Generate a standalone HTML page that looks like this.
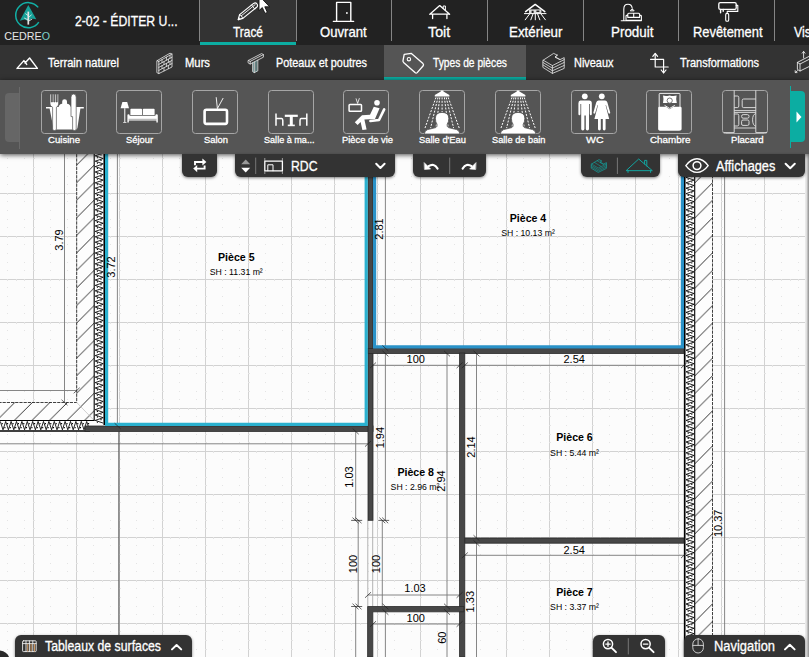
<!DOCTYPE html>
<html lang="fr">
<head>
<meta charset="utf-8">
<title>Cedreo</title>
<style>
html,body{margin:0;padding:0;}
body{width:809px;height:657px;overflow:hidden;position:relative;background:#fcfcfc;font-family:"Liberation Sans",sans-serif;}
#plan{position:absolute;left:0;top:0;width:809px;height:657px;}
#plan text{font-family:"Liberation Sans",sans-serif;fill:#000;}
.dim{font-size:11px;text-anchor:middle;}
.rn{font-size:10.6px;font-weight:bold;text-anchor:middle;}
.rs{font-size:8.7px;text-anchor:middle;}
/* UI */
.abs{position:absolute;}
.fx{position:absolute;color:#fff;-webkit-text-stroke:0.3px #fff;white-space:nowrap;transform-origin:0 0;display:block;}
#topbar{position:absolute;left:0;top:0;width:809px;height:45px;background:#222;}
#bar2{position:absolute;left:0;top:45px;width:809px;height:35px;background:#333;}
#bar3{position:absolute;left:0;top:80px;width:809px;height:74px;background:#555;box-shadow:0 1px 5px rgba(0,0,0,.7);}
.t{position:absolute;color:#fff;white-space:nowrap;line-height:1;}
.tab{position:absolute;top:0;height:45px;}
.sep{position:absolute;top:0;width:1px;height:41px;background:#858585;}
.tl{position:absolute;color:#fff;font-size:14px;white-space:nowrap;line-height:16px;top:24px;text-align:center;}
.t2{position:absolute;color:#fff;font-size:12.5px;white-space:nowrap;line-height:14px;top:56px;}
.ib{position:absolute;top:90px;width:44px;height:42.3px;border:1px solid #a6a6a6;border-radius:3.5px;}
.il{position:absolute;top:134px;width:76px;text-align:center;color:#fff;font-size:9.5px;line-height:11px;white-space:nowrap;}
.w{position:absolute;background:#333;box-shadow:0 1px 3px rgba(0,0,0,.5);}
.wt{top:154px;height:23px;border-radius:0 0 6px 6px;}
.wb{top:635px;height:22px;border-radius:6px 6px 0 0;}
.wtx{position:absolute;color:#fff;font-size:14px;line-height:16px;white-space:nowrap;}
</style>
</head>
<body>
<svg id="plan" width="809" height="657" viewBox="0 0 809 657">
<defs>
<pattern id="grid" x="33" y="150" width="43" height="43" patternUnits="userSpaceOnUse">
<rect width="43" height="43" fill="#fcfcfc"/>
<path d="M0.5 0V43M0 0.5H43" stroke="#d2d2d2" stroke-width="1" fill="none"/>
<g fill="#e4e4e4">
<rect x="17" y="8" width="1" height="1"/><rect x="34" y="8" width="1" height="1"/>
<rect x="17" y="17" width="1" height="1"/><rect x="17" y="26" width="1" height="1"/><rect x="34" y="26" width="1" height="1"/>
<rect x="17" y="34" width="1" height="1"/><rect x="34" y="34" width="1" height="1"/>
<rect x="8" y="0" width="1" height="2"/><rect x="17" y="0" width="1" height="2"/><rect x="26" y="0" width="1" height="2"/><rect x="34" y="0" width="1" height="2"/>
<rect x="0" y="8" width="2" height="1"/><rect x="0" y="17" width="2" height="1"/><rect x="0" y="26" width="2" height="1"/><rect x="0" y="34" width="2" height="1"/>
</g>
</pattern>
<pattern id="hatch" x="76.7" y="7.1" width="17.55" height="17.55" patternUnits="userSpaceOnUse">
<rect width="17.55" height="17.55" fill="#fdfdfd"/>
<path d="M-1 18.55L18.55 -1" stroke="#000" stroke-width="0.8" fill="none"/>
</pattern>
<pattern id="hatchR" x="694.7" y="7.5" width="17.55" height="17.55" patternUnits="userSpaceOnUse">
<rect width="17.55" height="17.55" fill="#fdfdfd"/>
<path d="M-1 18.55L18.55 -1" stroke="#000" stroke-width="0.8" fill="none"/>
</pattern>
</defs>
<rect x="0" y="0" width="809" height="657" fill="url(#grid)"/>
<!-- thin dimension / guide lines -->
<g stroke="#787878" stroke-width="0.9" fill="none">
<path d="M64.5 150V402.5M0 390.5H76.7M117.4 150V426M0 443.8H368"/>
<path d="M385.4 150V520.4M385.4 606.5V657M355.7 431V520.3M358.2 520.3V606.5M355.7 606.5V657M447 353V657M476.5 353V657"/>
<path d="M373 365.3H460M465 365.3H684M465 555.3H684M368 595H460M373 624H460M724.6 150V657M382.3 520.4V606.5"/>
<path d="M367.8 520.3V606.5M372.7 520.3V606.5" stroke="#aaa"/>
<path d="M118.9 431.4V657" stroke="#555" stroke-width="1.1"/>
</g>
<!-- left exterior wall -->
<path d="M76.7 150H94.2V420.5H0V402.5H76.7Z" fill="url(#hatch)"/>
<path d="M76.7 150V402.5H0" stroke="#111" stroke-width="0.8" stroke-dasharray="3.2 1" fill="none"/>
<path d="M76.7 402.5L94.2 420.5" stroke="#bbb" stroke-width="0.7"/>
<rect x="94.2" y="150" width="10.8" height="276" fill="#fff"/>
<rect x="0" y="420.5" width="94" height="10.9" fill="#fff"/>
<path d="M94.2 150V420.5H0" stroke="#000" stroke-width="1.1" fill="none"/>
<path d="M0 431H90M104.3 150V425" stroke="#000" stroke-width="1.7" fill="none"/>
<!-- right exterior wall -->
<rect x="694.7" y="150" width="17.8" height="507" fill="url(#hatchR)"/>
<rect x="684" y="150" width="10.7" height="507" fill="#fff"/>
<g fill="none" stroke="#000" stroke-width="0.85" stroke-linejoin="miter">
<path d="M95.2 150.40L103.2 153.10L95.2 155.80L103.2 158.50L95.2 161.20L103.2 163.90L95.2 166.60L103.2 169.30L95.2 172.00L103.2 174.70L95.2 177.40L103.2 180.10L95.2 182.80L103.2 185.50L95.2 188.20L103.2 190.90L95.2 193.60L103.2 196.30L95.2 199.00L103.2 201.70L95.2 204.40L103.2 207.10L95.2 209.80L103.2 212.50L95.2 215.20L103.2 217.90L95.2 220.60L103.2 223.30L95.2 226.00L103.2 228.70L95.2 231.40L103.2 234.10L95.2 236.80L103.2 239.50L95.2 242.20L103.2 244.90L95.2 247.60L103.2 250.30L95.2 253.00L103.2 255.70L95.2 258.40L103.2 261.10L95.2 263.80L103.2 266.50L95.2 269.20L103.2 271.90L95.2 274.60L103.2 277.30L95.2 280.00L103.2 282.70L95.2 285.40L103.2 288.10L95.2 290.80L103.2 293.50L95.2 296.20L103.2 298.90L95.2 301.60L103.2 304.30L95.2 307.00L103.2 309.70L95.2 312.40L103.2 315.10L95.2 317.80L103.2 320.50L95.2 323.20L103.2 325.90L95.2 328.60L103.2 331.30L95.2 334.00L103.2 336.70L95.2 339.40L103.2 342.10L95.2 344.80L103.2 347.50L95.2 350.20L103.2 352.90L95.2 355.60L103.2 358.30L95.2 361.00L103.2 363.70L95.2 366.40L103.2 369.10L95.2 371.80L103.2 374.50L95.2 377.20L103.2 379.90L95.2 382.60L103.2 385.30L95.2 388.00L103.2 390.70L95.2 393.40L103.2 396.10L95.2 398.80L103.2 401.50L95.2 404.20L103.2 406.90L95.2 409.60L103.2 412.30L95.2 415.00L103.2 417.70L95.2 420.40L103.2 423.10"/>
<path d="M686.0 150.40L694.0 153.10L686.0 155.80L694.0 158.50L686.0 161.20L694.0 163.90L686.0 166.60L694.0 169.30L686.0 172.00L694.0 174.70L686.0 177.40L694.0 180.10L686.0 182.80L694.0 185.50L686.0 188.20L694.0 190.90L686.0 193.60L694.0 196.30L686.0 199.00L694.0 201.70L686.0 204.40L694.0 207.10L686.0 209.80L694.0 212.50L686.0 215.20L694.0 217.90L686.0 220.60L694.0 223.30L686.0 226.00L694.0 228.70L686.0 231.40L694.0 234.10L686.0 236.80L694.0 239.50L686.0 242.20L694.0 244.90L686.0 247.60L694.0 250.30L686.0 253.00L694.0 255.70L686.0 258.40L694.0 261.10L686.0 263.80L694.0 266.50L686.0 269.20L694.0 271.90L686.0 274.60L694.0 277.30L686.0 280.00L694.0 282.70L686.0 285.40L694.0 288.10L686.0 290.80L694.0 293.50L686.0 296.20L694.0 298.90L686.0 301.60L694.0 304.30L686.0 307.00L694.0 309.70L686.0 312.40L694.0 315.10L686.0 317.80L694.0 320.50L686.0 323.20L694.0 325.90L686.0 328.60L694.0 331.30L686.0 334.00L694.0 336.70L686.0 339.40L694.0 342.10L686.0 344.80L694.0 347.50L686.0 350.20L694.0 352.90L686.0 355.60L694.0 358.30L686.0 361.00L694.0 363.70L686.0 366.40L694.0 369.10L686.0 371.80L694.0 374.50L686.0 377.20L694.0 379.90L686.0 382.60L694.0 385.30L686.0 388.00L694.0 390.70L686.0 393.40L694.0 396.10L686.0 398.80L694.0 401.50L686.0 404.20L694.0 406.90L686.0 409.60L694.0 412.30L686.0 415.00L694.0 417.70L686.0 420.40L694.0 423.10L686.0 425.80L694.0 428.50L686.0 431.20L694.0 433.90L686.0 436.60L694.0 439.30L686.0 442.00L694.0 444.70L686.0 447.40L694.0 450.10L686.0 452.80L694.0 455.50L686.0 458.20L694.0 460.90L686.0 463.60L694.0 466.30L686.0 469.00L694.0 471.70L686.0 474.40L694.0 477.10L686.0 479.80L694.0 482.50L686.0 485.20L694.0 487.90L686.0 490.60L694.0 493.30L686.0 496.00L694.0 498.70L686.0 501.40L694.0 504.10L686.0 506.80L694.0 509.50L686.0 512.20L694.0 514.90L686.0 517.60L694.0 520.30L686.0 523.00L694.0 525.70L686.0 528.40L694.0 531.10L686.0 533.80L694.0 536.50L686.0 539.20L694.0 541.90L686.0 544.60L694.0 547.30L686.0 550.00L694.0 552.70L686.0 555.40L694.0 558.10L686.0 560.80L694.0 563.50L686.0 566.20L694.0 568.90L686.0 571.60L694.0 574.30L686.0 577.00L694.0 579.70L686.0 582.40L694.0 585.10L686.0 587.80L694.0 590.50L686.0 593.20L694.0 595.90L686.0 598.60L694.0 601.30L686.0 604.00L694.0 606.70L686.0 609.40L694.0 612.10L686.0 614.80L694.0 617.50L686.0 620.20L694.0 622.90L686.0 625.60L694.0 628.30L686.0 631.00L694.0 633.70L686.0 636.40L694.0 639.10L686.0 641.80L694.0 644.50L686.0 647.20L694.0 649.90L686.0 652.60L694.0 655.30"/>
<path d="M0.30 421.4L3.00 429.8L5.70 421.4L8.40 429.8L11.10 421.4L13.80 429.8L16.50 421.4L19.20 429.8L21.90 421.4L24.60 429.8L27.30 421.4L30.00 429.8L32.70 421.4L35.40 429.8L38.10 421.4L40.80 429.8L43.50 421.4L46.20 429.8L48.90 421.4L51.60 429.8L54.30 421.4L57.00 429.8L59.70 421.4L62.40 429.8L65.10 421.4L67.80 429.8L70.50 421.4L73.20 429.8L75.90 421.4L78.60 429.8L81.30 421.4L84.00 429.8L86.70 421.4L89.40 429.8"/>
</g>
<g fill="none" stroke="#000" stroke-width="1.1">
<path d="M97.4 151.75V424" stroke-dasharray="1.1 4.3"/>
<path d="M101 154.45V424" stroke-dasharray="1.1 4.3"/>
<path d="M688.2 151.75V657" stroke-dasharray="1.1 4.3"/>
<path d="M691.8 154.45V657" stroke-dasharray="1.1 4.3"/>
<path d="M1.65 423.6H92" stroke-dasharray="1.1 4.3"/>
<path d="M4.35 427.6H88" stroke-dasharray="1.1 4.3"/>
</g>

<path d="M712.5 150V657" stroke="#111" stroke-width="0.8" stroke-dasharray="3.2 1" fill="none"/>
<path d="M694.7 150V657" stroke="#000" stroke-width="1.1" fill="none"/>
<path d="M684.7 150V657" stroke="#000" stroke-width="1.7" fill="none"/>
<!-- dark walls -->
<g fill="#474747" stroke="#2a2a2a" stroke-width="0.8">
<rect x="85" y="426" width="288" height="5.4"/>
<rect x="368" y="150" width="5" height="370.3"/>
<rect x="368" y="348.5" width="316" height="5"/>
<rect x="459.6" y="353" width="5.2" height="304"/>
<rect x="464.8" y="538" width="219.2" height="5.2"/>
<path d="M367.6 657V606.5H464V611.8H372.8V657Z"/>
</g>
<!-- teal room outlines -->
<g fill="none" stroke-width="3.2">
<path d="M106.6 150V424.4H366.2V150" stroke="#2bb1cf"/>
<path d="M374.6 150V346.8H682.4V150" stroke="#2a92c8"/>
</g>
<!-- ticks -->
<g stroke="#222" stroke-width="0.7" fill="none">
<path d="M61.5 399.7l6 5.6M114.6 423.2l6 5.6M382.4 345.4l6 5.6M382.4 350.8l6 5.6M444.0 350.8l6 5.6M473.5 350.8l6 5.6M352.7 428.6l6 5.6M352.5 517.6l6 5.6M355.5 517.6l6 5.6M352.5 603.7l6 5.6M355.5 603.7l6 5.6M379.3 517.6l6 5.6M382.2 517.6l6 5.6M382.4 603.7l6 5.6M382.4 609.2l6 5.6M444.0 603.7l6 5.6M444.0 609.2l6 5.6M473.5 535.2l6 5.6M473.5 540.4l6 5.6M73.7 393.3l6 -5.6M365.0 446.6l6 -5.6M370.0 368.1l6 -5.6M456.6 368.1l6 -5.6M461.8 368.1l6 -5.6M681.0 368.1l6 -5.6M461.8 558.1l6 -5.6M681.0 558.1l6 -5.6M365.0 597.8l6 -5.6M456.6 597.8l6 -5.6M370.0 626.8l6 -5.6M456.6 626.8l6 -5.6M351.2 520.4H362.2M351.2 606.5H362.2M378.4 520.4H389.2"/>
</g>
<!-- dimension texts -->
<g class="dim">
<text transform="translate(63.4 240) rotate(-90)">3.79</text>
<text transform="translate(114.6 267) rotate(-90)">3.72</text>
<text transform="translate(383.2 229) rotate(-90)">2.81</text>
<text transform="translate(383.5 437.6) rotate(-90)">1.94</text>
<text transform="translate(353 477) rotate(-90)">1.03</text>
<text transform="translate(356.7 564) rotate(-90)">100</text>
<text transform="translate(380 564) rotate(-90)">100</text>
<text transform="translate(445 481) rotate(-90)">2.94</text>
<text transform="translate(475 447) rotate(-90)">2.14</text>
<text transform="translate(474 601.7) rotate(-90)">1.33</text>
<text transform="translate(445.7 637.7) rotate(-90)">60</text>
<text transform="translate(722 523.3) rotate(-90)">10.37</text>
<text x="415.7" y="363.3">100</text>
<text x="574.2" y="363.3">2.54</text>
<text x="574.2" y="554">2.54</text>
<text x="415" y="592">1.03</text>
<text x="415.7" y="622">100</text>
</g>
<!-- room labels -->
<text class="rn" x="236.3" y="261">Pièce 5</text><text class="rs" x="236.3" y="275.2">SH : 11.31 m²</text>
<text class="rn" x="528" y="222">Pièce 4</text><text class="rs" x="528" y="236.4">SH : 10.13 m²</text>
<text class="rn" x="574.5" y="440.8">Pièce 6</text><text class="rs" x="574.5" y="455.6">SH : 5.44 m²</text>
<text class="rn" x="415.7" y="475.8">Pièce 8</text><text class="rs" x="415" y="490.4">SH : 2.96 m²</text>
<text class="rn" x="574.5" y="595.8">Pièce 7</text><text class="rs" x="574.5" y="610.4">SH : 3.37 m²</text>

</svg>
<div class="abs" id="rstrip" style="left:804.6px;top:154px;width:4.4px;height:503px;background:linear-gradient(90deg,#efefef 0%,#dedede 40%,#b4b4b4 70%,#8e8e8e 100%)"></div>
<div id="topbar">
<svg class="abs" style="left:0;top:0" width="60" height="45" viewBox="0 0 60 45">
<path d="M38.2 7.4A12.6 12.6 0 1 0 38.8 22.2" fill="none" stroke="#12b0a6" stroke-width="1.5"/>
<path d="M28.3 5L19.8 20.8L24.6 19.4L28.2 21L31.6 18.6L36.3 19.2Z" fill="#17a198"/>
<path d="M28.3 11.6V24.6" stroke="#e4e4e4" stroke-width="1.7" fill="none"/>
<path d="M28.2 15.6l-2.8-2M28.2 17.6l3.4-2.8M28.2 20l-4-2M28.2 21.4l4-2.4" stroke="#dfe9e8" stroke-width="0.9" fill="none"/>
<text x="4.2" y="40" font-family="Liberation Sans,sans-serif" font-size="11.6" fill="#e6e6e6" textLength="45.8" lengthAdjust="spacingAndGlyphs">CEDRE<tspan fill="#7fd0ca">O</tspan></text>
</svg>

<div class="abs" style="left:200px;top:0;width:96px;height:42px;background:#333;border-bottom:3px solid #0cada2"></div>
<div class="sep" style="left:199px"></div><div class="sep" style="left:296px"></div>
<div class="sep" style="left:391px"></div><div class="sep" style="left:487px"></div><div class="sep" style="left:583px"></div><div class="sep" style="left:678px"></div><div class="sep" style="left:774px"></div>
<svg class="abs" style="left:0;top:0" width="809" height="45" viewBox="0 0 809 45" fill="none" stroke="#fff" stroke-width="1.2" stroke-linejoin="round" stroke-linecap="round">
<!-- pencil -->
<path d="M238.2 19.6L239.6 14.6L253.6 3.4Q255.6 2.2 257 4Q258.3 5.8 256.6 7.3L242.8 18.4Z"/>
<path d="M239.6 14.6Q242 15.4 242.8 18.4M241.3 15.8L255.2 4.6M251.6 5L254.6 8.9" stroke-width="0.9"/>
<path d="M238.2 19.6l0.6-2.2l1.4 1.6Z" fill="#fff" stroke-width="0.6"/>
<!-- door -->
<path d="M336.6 21.3V2.4H350.8V21.3M333.4 21.4H353.6" stroke-width="1.4"/>
<circle cx="346.9" cy="13" r="0.9" fill="#fff" stroke="none"/>
<!-- roof -->
<path d="M429.8 14.2L439.7 5.6L449.6 14.2M432.6 14.2V18.6M446.9 14.2V18.6M430.4 14.2H449" stroke-width="1.3"/>
<path d="M443.2 8.4V6H445.4V10.4" stroke-width="1"/>
<!-- exterior -->
<g stroke-width="1">
<path d="M525.6 11.6L535.2 4.4L544.8 11.6" stroke-width="1.5"/>
<path d="M529 9.4V13.2H541.4V9.4" fill="#ddd" stroke="none"/>
<path d="M531.6 13.2V10.8H533.6V13.2ZM536.4 10.4H539.4V12H536.4Z" fill="#222" stroke="none"/>
<path d="M524.4 13.6H546"/>
<path d="M529.6 14L525.2 19.8M533 14L530.8 19.8M535.3 14V19.8M537.6 14L539.8 19.8M541 14L545.4 19.8"/>
</g>
<!-- produit: lamp + sofa -->
<g stroke-width="1.1">
<path d="M623.8 20.6V9.2Q623.8 4.2 628 4.2Q631.8 4.2 632.2 8.2M621.2 20.8H641.2"/>
<path d="M630.4 10.6Q632.2 7.4 634 10.6Z" fill="#fff" stroke-width="0.8"/>
<path d="M627.8 17V14.2Q627.8 13.2 628.8 13.2H638.6Q639.6 13.2 639.6 14.2V17M626 20.4V16.2Q626 15.4 626.9 15.4Q627.8 15.4 627.8 16.2V17.4H639.6V16.2Q639.6 15.4 640.5 15.4Q641.4 15.4 641.4 16.2V20.4ZM633.7 13.4V17.2"/>
</g>
<!-- roller -->
<g stroke-width="1.3">
<rect x="718.8" y="2.6" width="17.4" height="6.8" rx="1.4"/>
<path d="M736.2 5.4H737.8V11.4H727.2V13.4" stroke-width="1.1"/>
<rect x="725.7" y="13.4" width="3" height="7.8" rx="1.3" stroke-width="1.1"/>
<path d="M720.6 9.4V12.8M723.2 9.4V11.2" stroke-width="1.4"/>
</g>
</svg>

</div>
<div id="bar2">
<div class="abs" style="left:384px;top:0;width:142px;height:32px;background:#555;border-bottom:3px solid #0cada2"></div>
<svg class="abs" style="left:0;top:0" width="809" height="35" viewBox="0 45 809 35" fill="none" stroke="#fff" stroke-width="1.2" stroke-linejoin="round" stroke-linecap="round">
<!-- mountain -->
<path d="M17 68.4L23.9 60.6L26.7 64.4M17 68.4H37.4L29.6 58L25 63" stroke-width="1.4"/>
<!-- wall (bricks) -->
<g stroke-width="0.8" stroke="#e8e8e8">
<path d="M157.2 60.6L170 53.2L172 54V67L158.8 73.6L157.2 72.8ZM158.8 61.4V73.6M158.8 61.4L172 54M157.2 60.6L158.8 61.4"/>
<path d="M158.8 64.4L172 57.2M158.8 67.4L172 60.4M158.8 70.4L172 63.6M162 59.6V62.6M166.4 57.2V60.2M170 55.2V58.2M164 61.6V64.6M168.4 59.2V62.4M162 65.6V68.6M166.4 63.4V66.4M170 61.4V64.4M164 67.8V70.8M168.4 65.6V68.6"/>
</g>
<!-- post and beam -->
<g stroke-width="0.8" stroke="#e8e8e8">
<path d="M248.4 60.4L261.6 53.6L263.4 54.6V57.2L250.2 64L248.4 63ZM248.4 60.4L250.2 61.4L263.4 54.6M250.2 61.4V64"/>
<path d="M252.6 62.8V71.6L254.4 72.6L257.8 70.8V60.2M254.4 62V72.6" />
<path d="M253.5 62.4V72M255.6 61.6V71.8M256.8 61V71.2" stroke="#9cc" stroke-width="0.6"/>
</g>
<!-- tag -->
<g stroke-width="1.3">
<path d="M404.2 54.4L411.4 53.4L423 63.6Q424 64.6 423.2 65.8L417.2 72.6Q416.2 73.6 415 72.6L403.6 62.4Q402.8 61.6 403 60.6Z"/>
<circle cx="408.9" cy="59.2" r="1.7" stroke-width="1.1"/>
</g>
<!-- levels -->
<g stroke-width="0.8" stroke="#e8e8e8">
<path d="M543.2 60.2L553.6 53.4L557.4 55.2L555 57L560 59.6L564.2 57.6V68.4L552.4 73.4L543.2 67.6Z"/>
<path d="M543.2 60.2L552.4 65.6L564.2 59.6M543.2 62.6L552.4 68.2L564.2 62.4M543.2 65L552.4 70.8L564.2 65.4M552.4 65.6V73.4M557.4 55.2L555 57L560 59.6"/>
</g>
<!-- transformations -->
<g stroke-width="1.2">
<path d="M655.2 54V67H668.2M650.6 59.4H663.6V72.4"/>
<path d="M652.8 56.4L655.2 53.4L657.6 56.4M661.2 70L663.6 73L666 70" />
</g>
<!-- box with arrows (cut) -->
<g stroke-width="0.9" stroke="#e8e8e8">
<path d="M797.4 62.4L809 56.4M797.4 62.4V69.4L800 71L809 66.6M800 64V71M797.4 62.4L800 64L809 59.4"/>
<path d="M803.6 58V51.6M802.2 53.2L803.6 51.4L805 53.2M795.4 72.4L797.6 70.6M795.2 70.6V72.6H797"/>
</g>
</svg>

</div>
<div id="bar3">
<div class="abs" style="left:5px;top:13px;width:14px;height:49px;background:#666;border-radius:4px 0 0 4px"></div>
<div class="abs" style="left:19px;top:7px;width:1px;height:62px;background:#6a6a6a"></div>
<div class="abs" style="left:790px;top:6px;width:1px;height:62px;background:#0cada2"></div>
<div class="abs" style="left:791px;top:11px;width:14px;height:51px;background:#0cada2;border-radius:0 4px 4px 0"></div>
<svg class="abs" style="left:795px;top:31px" width="8" height="12"><path d="M1.5 0.5L6.5 6L1.5 11.5Z" fill="#fff"/></svg>
</div>
<div class="ib" style="left:41.1px"></div>
<div class="ib" style="left:116.3px"></div>
<div class="ib" style="left:192.4px"></div>
<div class="ib" style="left:268.4px"></div>
<div class="ib" style="left:343.1px"></div>
<div class="ib" style="left:419.2px"></div>
<div class="ib" style="left:495.1px"></div>
<div class="ib" style="left:571.2px"></div>
<div class="ib" style="left:646.4px"></div>
<div class="ib" style="left:722.4px"></div>
<svg class="abs" style="left:0;top:80px" width="809" height="74" viewBox="0 80 809 74" fill="#fff" stroke="none">
<!-- Cuisine -->
<g>
<path d="M46 107H83.8V108.4H80.4L77.4 128Q77.2 129.6 75.6 129.6H55.2Q53.6 129.6 53.4 128L49.6 108.4H46Z"/>
<path d="M58.6 107Q59.2 104 62.2 103.7V101.6Q62.2 99.3 64.6 99.3Q67 99.3 67 101.6V103.7Q70 104 70.8 107Z"/>
<path d="M50 94H51.4V102H52.4V94H53.8V102H54.8V94H56.2V102H57.2V94H58.6V104Q58.6 106.4 56.4 107.2V129Q56.4 130.6 54.4 130.6Q52.6 130.6 52.6 129V107.2Q50 106.4 50 104Z" stroke="#555" stroke-width="0.7"/>
<path d="M71 97.4Q71 94 73.6 94Q76.2 94 76.2 97.4V129Q76.2 130.6 74.4 130.6Q72.6 130.6 72.6 129V116.6H71Z" stroke="#555" stroke-width="0.7"/>
</g>
<!-- Sejour -->
<g>
<path d="M122.4 102H127.2L129 108.2H120.6Z"/>
<path d="M124.3 108.2H125.3V122H126.4V122.8H123.2V122H124.3Z"/>
<path d="M130.4 109.6Q130.4 108.8 131.2 108.8H141.2Q142 108.8 142 109.6V115H130.4ZM142.8 109.6Q142.8 108.8 143.6 108.8H153.8Q154.6 108.8 154.6 109.6V115H142.8ZM127.4 115.2Q127.4 114.2 128.4 114.2Q129.6 114.2 129.6 115.2V115.8H155.4V115.2Q155.4 114.2 156.6 114.2Q157.8 114.2 157.8 115.2V122.6H156.4V120.6H128.8V122.6H127.4Z"/>
<path d="M128.6 119.3H156.6" stroke="#555" stroke-width="0.5"/>
</g>
<!-- Salon TV -->
<g fill="none" stroke="#fff">
<rect x="204.6" y="109.7" width="22.4" height="14.2" rx="1.8" stroke-width="2.6"/>
<path d="M216.2 97.2L217.4 108.6L223.2 98" stroke-width="0.9"/>
</g>
<!-- Salle a manger -->
<g fill="none" stroke="#fff" stroke-width="1.5">
<path d="M276 113.4V125.8M276 118.6H281.6Q282.8 118.8 282.8 120.4V125.8"/>
<path d="M306.8 113.4V125.8M306.8 118.6H301.2Q300 118.8 300 120.4V125.8"/>
<path d="M284.8 115.8H297.8" stroke-width="2.2"/>
<path d="M291.3 116V125.6" stroke-width="3"/>
<path d="M287.8 125.4H294.8" stroke-width="1.6"/>
</g>
<!-- Piece de vie -->
<g>
<rect x="349.1" y="104.4" width="12.4" height="6.8" rx="0.8" fill="none" stroke="#fff" stroke-width="1.5"/>
<path d="M356 98.4L357.6 103.4L359.4 98.2" fill="none" stroke="#fff" stroke-width="0.8"/>
<circle cx="377" cy="102.8" r="2.8"/>
<path d="M373.8 106.8L379.6 108.2L375 119L364.4 119.6L366.6 129.4L362.4 130L360.6 122L357.6 125L354.8 122.2L362 115.2L370 114.8Z"/>
<path d="M384.2 109.4L379 120L370.4 121" fill="none" stroke="#fff" stroke-width="2.6" stroke-linecap="round" stroke-linejoin="round"/>
</g>
<!-- Salle d'Eau / Salle de bain showers -->
<g id="shw">
<path d="M440.8 90.4H443.4V91.6L449.4 95V96.4H434.8V95L440.8 91.6Z"/>
<g fill="none" stroke="#fff" stroke-width="1" stroke-dasharray="2 1.4">
<path d="M436 97.4L425 128M438 97.4L430.6 128M439.8 97.4L436 128M442.1 97.4V112M444.4 97.4L448.2 128M446.2 97.4L453.6 128M448.2 97.4L459.2 128"/>
</g>
<path d="M435.4 118.4Q435.4 112.4 442.1 112.4Q448.8 112.4 448.8 118.4Q448.8 122 447.2 124.2Q446.6 126.6 448.4 127.6L456.6 129.6Q459.4 130.6 460 134H424.2Q424.8 130.6 427.6 129.6L435.8 127.6Q437.6 126.6 437 124.2Q435.4 122 435.4 118.4Z" stroke="#555" stroke-width="0.8"/>
</g>
<use href="#shw" x="76"/>
<!-- WC -->
<g>
<circle cx="584.8" cy="96.3" r="2.9"/>
<path d="M580.4 100.6H589.2Q591.8 100.6 591.8 103.2V114Q591.8 115.2 590.8 115.2Q589.8 115.2 589.8 114V104H589V129Q589 130.4 587.4 130.4Q585.8 130.4 585.8 129V115.6H584.4V129Q584.4 130.4 582.8 130.4Q581.2 130.4 581.2 129V104H580.4V114Q580.4 115.2 579.4 115.2Q578.4 115.2 578.4 114V103.2Q578.4 100.6 580.4 100.6Z"/>
<circle cx="601.8" cy="96.3" r="2.9"/>
<path d="M598.6 100.6H605Q606.8 100.6 607.4 102.4L610.2 112.4Q610.4 113.4 609.6 113.6Q608.8 113.8 608.4 113L606 105L605.6 105.2L609.2 119H605.6V129Q605.6 130.4 604.2 130.4Q602.8 130.4 602.8 129V119H600.8V129Q600.8 130.4 599.4 130.4Q598 130.4 598 129V119H594.4L598 105.2L597.6 105L595.2 113Q594.8 113.8 594 113.6Q593.2 113.4 593.4 112.4L596.2 102.4Q596.8 100.6 598.6 100.6Z"/>
</g>
<!-- Chambre -->
<g>
<rect x="659.2" y="93.4" width="20.8" height="36.6" rx="0.8" fill="none" stroke="#fff" stroke-width="0.9"/>
<path d="M663 95.6Q666 96.6 669.6 95.4Q673.4 96.6 676.6 95.6Q675.6 99.4 676.8 103H663Q664 99.4 663 95.6Z"/>
<circle cx="669.7" cy="100.6" r="2.6" stroke="#555" stroke-width="0.8"/>
<path d="M658.2 108Q658.2 106.8 659.4 106.8H666L669.7 109.2L673.4 106.8H680.2Q681.6 106.8 681.6 108V129Q681.6 130.4 680.2 130.4H659.4Q658.2 130.4 658.2 129Z"/>
<path d="M664.6 105.4L669.7 108.4L674.8 105.4" fill="none" stroke="#fff" stroke-width="0.9"/>
</g>
<!-- Placard -->
<g fill="none" stroke="#e4e4e4" stroke-width="0.9">
<path d="M734.2 90.4V132.6H723.6M755.8 90.4V132.6H767M734.2 110.6H755.8M734.2 128H755.8M734.2 112.4H755.8"/>
<path d="M734.2 96H737.4Q738.8 96 738.8 97.6V106Q738.8 107.6 737.4 107.6H734.2M755.8 99H743.6Q742.2 99 742.2 100.4V106.2Q742.2 107.6 743.6 107.6H755.8M734.2 114H737.4Q738.8 114 738.8 115.6V124.4Q738.8 126 737.4 126H734.2M755.8 113.6Q752.6 114.4 752.6 119.8Q752.6 125.4 755.8 126.2"/>
<rect x="741.6" y="114.6" width="7.4" height="3.6" rx="1.6"/><rect x="741.6" y="120" width="7.4" height="5.4" rx="1.4"/>
</g>
</svg>

<!-- floating widgets -->
<div class="w wt" style="left:181.5px;width:35.5px"></div>
<div class="w wt" style="left:235px;width:159.5px"></div>
<div class="w wt" style="left:413px;width:73px"></div>
<div class="w wt" style="left:581.2px;width:78.6px"></div>
<div class="w wt" style="left:678px;width:126.5px"></div>
<div class="w wb" style="left:14.5px;width:177.5px"></div>
<div class="w wb" style="left:593px;width:72px"></div>
<div class="w wb" style="left:683.5px;width:121.5px"></div>
<svg class="abs" style="left:0;top:150px" width="809" height="32" viewBox="0 150 809 32" fill="none" stroke="#fff" stroke-linecap="round" stroke-linejoin="round">
<!-- swap -->
<g stroke-width="1.9" stroke-linecap="butt" stroke-linejoin="miter">
<path d="M195 165.2V162H203.4"/><path d="M202.4 158.4L206.4 162L202.4 165.6Z" fill="#fff" stroke="none"/>
<path d="M204.6 165.4V168.6H196.2"/><path d="M197.2 165L193.2 168.6L197.2 172.2Z" fill="#fff" stroke="none"/>
</g>
<!-- level selector -->
<path d="M245.7 159.4L250.2 164.2H241.2Z" fill="#999" stroke="none"/>
<path d="M245.7 172.6L250.2 167.8H241.2Z" fill="#fff" stroke="none"/>
<path d="M255.7 158V173.6" stroke="#777" stroke-width="1"/>
<rect x="264.8" y="161.2" width="17.6" height="9.6" stroke-width="1.3"/>
<path d="M267.8 170.8V164.8H273V170.8" stroke-width="1"/>
<path d="M264.8 158.4V161M282.4 158.4V161M264.8 171.4V173.6M282.4 171.4V173.6" stroke-width="0.7" stroke="#ccc"/>
<path d="M376.2 163.8L380.4 168L384.6 163.8" stroke-width="2"/>
<!-- undo / redo -->
<path d="M449.7 158V173.6" stroke="#777" stroke-width="1"/>
<path d="M428.6 166.2Q433.8 162.6 437.6 168.6" stroke-width="2.1"/>
<path d="M424.4 162.8L430.6 169L424.8 169.4Z" fill="#fff" stroke="#fff" stroke-width="0.6"/>
<path d="M471.6 166.2Q466.4 162.6 462.6 168.6" stroke-width="2.1"/>
<path d="M475.8 162.8L469.6 169L475.4 169.4Z" fill="#fff" stroke="#fff" stroke-width="0.6"/>
<!-- layers (teal) -->
<g stroke="#12a5a0" stroke-width="0.7">
<path d="M591.6 164L599 159.6L601.8 161L600 162.2L603.8 164L606.4 162.6V168.4L598.2 172.4L591.6 168.4Z"/>
<path d="M591.6 164L598.2 168L606.4 164M591.6 165.5L598.2 169.5L606.4 165.5M591.6 167L598.2 171L606.4 167M594.4 162.4L601 166.4M597.2 160.8L604 164.8" stroke-width="0.55"/>
</g>
<path d="M617.4 158V173.6" stroke="#777" stroke-width="1"/>
<g stroke="#12a5a0" stroke-width="1">
<path d="M626.4 170.4L638.7 159L652 170.4ZM644.6 164V160.4H646.8V166M628 170.4V172.4M650.6 170.4V172.4"/>
</g>
<!-- eye -->
<path d="M685.8 165.6Q691 158.8 697 158.8Q703 158.8 708.2 165.6Q703 172.4 697 172.4Q691 172.4 685.8 165.6Z" stroke-width="1.4"/>
<circle cx="697" cy="165.6" r="3.9" stroke-width="1.5"/>
<path d="M785.6 163.8L790.2 168.2L794.8 163.8" stroke-width="2"/>
</svg>
<svg class="abs" style="left:0;top:630px" width="809" height="27" viewBox="0 630 809 27" fill="none" stroke="#fff" stroke-linecap="round" stroke-linejoin="round">
<path d="M0 650.4Q7 651.4 9 657H0Z" fill="#2a2a2a" stroke="none"/>
<!-- table -->
<g stroke-width="0.9" stroke="#eee">
<rect x="22.6" y="640.8" width="13.6" height="10.8" rx="0.8"/>
<path d="M22.6 643.6H36.2M26 640.8V651.6M29.4 640.8V651.6M32.8 640.8V651.6"/>
<path d="M27.7 644.4V651M31.1 644.4V651M34.5 644.4V651" stroke="#c96" stroke-width="1.2" stroke-dasharray="1 1"/>
</g>
<path d="M172 649.4L176.6 645L181.2 649.4" stroke-width="2"/>
<!-- zoom in/out -->
<g stroke-width="1.5">
<circle cx="608" cy="644.1" r="4.6"/><path d="M611.4 647.6L616 652.2" stroke-width="1.9"/>
<path d="M605.8 644.1H610.2M608 641.9V646.3" stroke-width="1.3"/>
<circle cx="645.6" cy="644.1" r="4.6"/><path d="M649 647.6L653.6 652.2" stroke-width="1.9"/>
<path d="M643.4 644.1H647.8" stroke-width="1.4"/>
</g>
<path d="M628.3 638.6V654" stroke="#777" stroke-width="1"/>
<!-- mouse -->
<g stroke="#ccc" stroke-width="1">
<rect x="692.8" y="638.8" width="10.6" height="14.2" rx="5.3"/>
<path d="M698.1 638.8V645.4M692.8 645.4H703.4"/>
</g>
<path d="M785 649.4L789.8 644.8L794.6 649.4" stroke-width="2"/>
</svg>



<span id="ttl" class="fx" style="left:75.4px;top:14.23px;font-size:14.5px;line-height:14.5px;transform:scaleX(0.8433);">2-02 - ÉDITER U...</span>
<span id="tb1" class="fx" style="left:232.9px;top:24.73px;font-size:14.5px;line-height:14.5px;transform:scaleX(0.8212);">Tracé</span>
<span id="tb2" class="fx" style="left:320.3px;top:24.73px;font-size:14.5px;line-height:14.5px;transform:scaleX(0.9051);">Ouvrant</span>
<span id="tb3" class="fx" style="left:428.3px;top:24.73px;font-size:14.5px;line-height:14.5px;transform:scaleX(0.9833);">Toit</span>
<span id="tb4" class="fx" style="left:508.5px;top:24.73px;font-size:14.5px;line-height:14.5px;transform:scaleX(0.9219);">Extérieur</span>
<span id="tb5" class="fx" style="left:610.5px;top:24.73px;font-size:14.5px;line-height:14.5px;transform:scaleX(0.9249);">Produit</span>
<span id="tb6" class="fx" style="left:692.5px;top:24.73px;font-size:14.5px;line-height:14.5px;transform:scaleX(0.8889);">Revêtement</span>
<span id="tb7" class="fx" style="left:794.4px;top:24.73px;font-size:14.5px;line-height:14.5px;transform:scaleX(0.8547);">Vis</span>
<span id="s1" class="fx" style="left:47.5px;top:57.26px;font-size:12.1px;line-height:12.1px;transform:scaleX(0.9184);">Terrain naturel</span>
<span id="s2" class="fx" style="left:184.5px;top:57.26px;font-size:12.1px;line-height:12.1px;transform:scaleX(0.9302);">Murs</span>
<span id="s3" class="fx" style="left:275.5px;top:57.26px;font-size:12.1px;line-height:12.1px;transform:scaleX(0.8963);">Poteaux et poutres</span>
<span id="s4" class="fx" style="left:433.0px;top:57.26px;font-size:12.1px;line-height:12.1px;transform:scaleX(0.8466);">Types de pièces</span>
<span id="s5" class="fx" style="left:573.5px;top:57.26px;font-size:12.1px;line-height:12.1px;transform:scaleX(0.9038);">Niveaux</span>
<span id="s6" class="fx" style="left:679.5px;top:57.26px;font-size:12.1px;line-height:12.1px;transform:scaleX(0.9087);">Transformations</span>
<span id="l1" class="fx" style="left:48.0px;top:134.79px;font-size:9.7px;line-height:9.7px;transform:scaleX(0.9903);">Cuisine</span>
<span id="l2" class="fx" style="left:126.0px;top:134.79px;font-size:9.7px;line-height:9.7px;transform:scaleX(0.9637);">Séjour</span>
<span id="l3" class="fx" style="left:203.5px;top:134.79px;font-size:9.7px;line-height:9.7px;transform:scaleX(0.9685);">Salon</span>
<span id="l4" class="fx" style="left:263.5px;top:134.79px;font-size:9.7px;line-height:9.7px;transform:scaleX(0.9376);">Salle à ma...</span>
<span id="l5" class="fx" style="left:341.5px;top:134.79px;font-size:9.7px;line-height:9.7px;transform:scaleX(0.9663);">Pièce de vie</span>
<span id="l6" class="fx" style="left:419.0px;top:134.79px;font-size:9.7px;line-height:9.7px;transform:scaleX(0.9647);">Salle d'Eau</span>
<span id="l7" class="fx" style="left:492.0px;top:134.79px;font-size:9.7px;line-height:9.7px;transform:scaleX(0.9551);">Salle de bain</span>
<span id="l8" class="fx" style="left:586.0px;top:134.79px;font-size:9.7px;line-height:9.7px;transform:scaleX(1.0842);">WC</span>
<span id="l9" class="fx" style="left:650.0px;top:134.79px;font-size:9.7px;line-height:9.7px;transform:scaleX(1.0165);">Chambre</span>
<span id="l10" class="fx" style="left:730.5px;top:134.79px;font-size:9.7px;line-height:9.7px;transform:scaleX(0.9891);">Placard</span>
<span id="w1" class="fx" style="left:290.8px;top:158.75px;font-size:14px;line-height:14px;transform:scaleX(0.8733);">RDC</span>
<span id="w2" class="fx" style="left:715.8px;top:159.15px;font-size:14px;line-height:14px;transform:scaleX(0.9106);">Affichages</span>
<span id="w3" class="fx" style="left:45.4px;top:638.95px;font-size:14px;line-height:14px;transform:scaleX(0.8767);">Tableaux de surfaces</span>
<span id="w4" class="fx" style="left:713.6px;top:638.95px;font-size:14px;line-height:14px;transform:scaleX(0.9221);">Navigation</span>
<svg class="abs" style="left:250px;top:0" width="30" height="20" viewBox="250 0 30 20"><path d="M259 -4.4V10.6L262.3 7.6L265 13.4L267.4 12.4L264.8 6.8H269.6Z" fill="#fff" stroke="#111" stroke-width="0.9" stroke-linejoin="round"/></svg>

</body>
</html>
